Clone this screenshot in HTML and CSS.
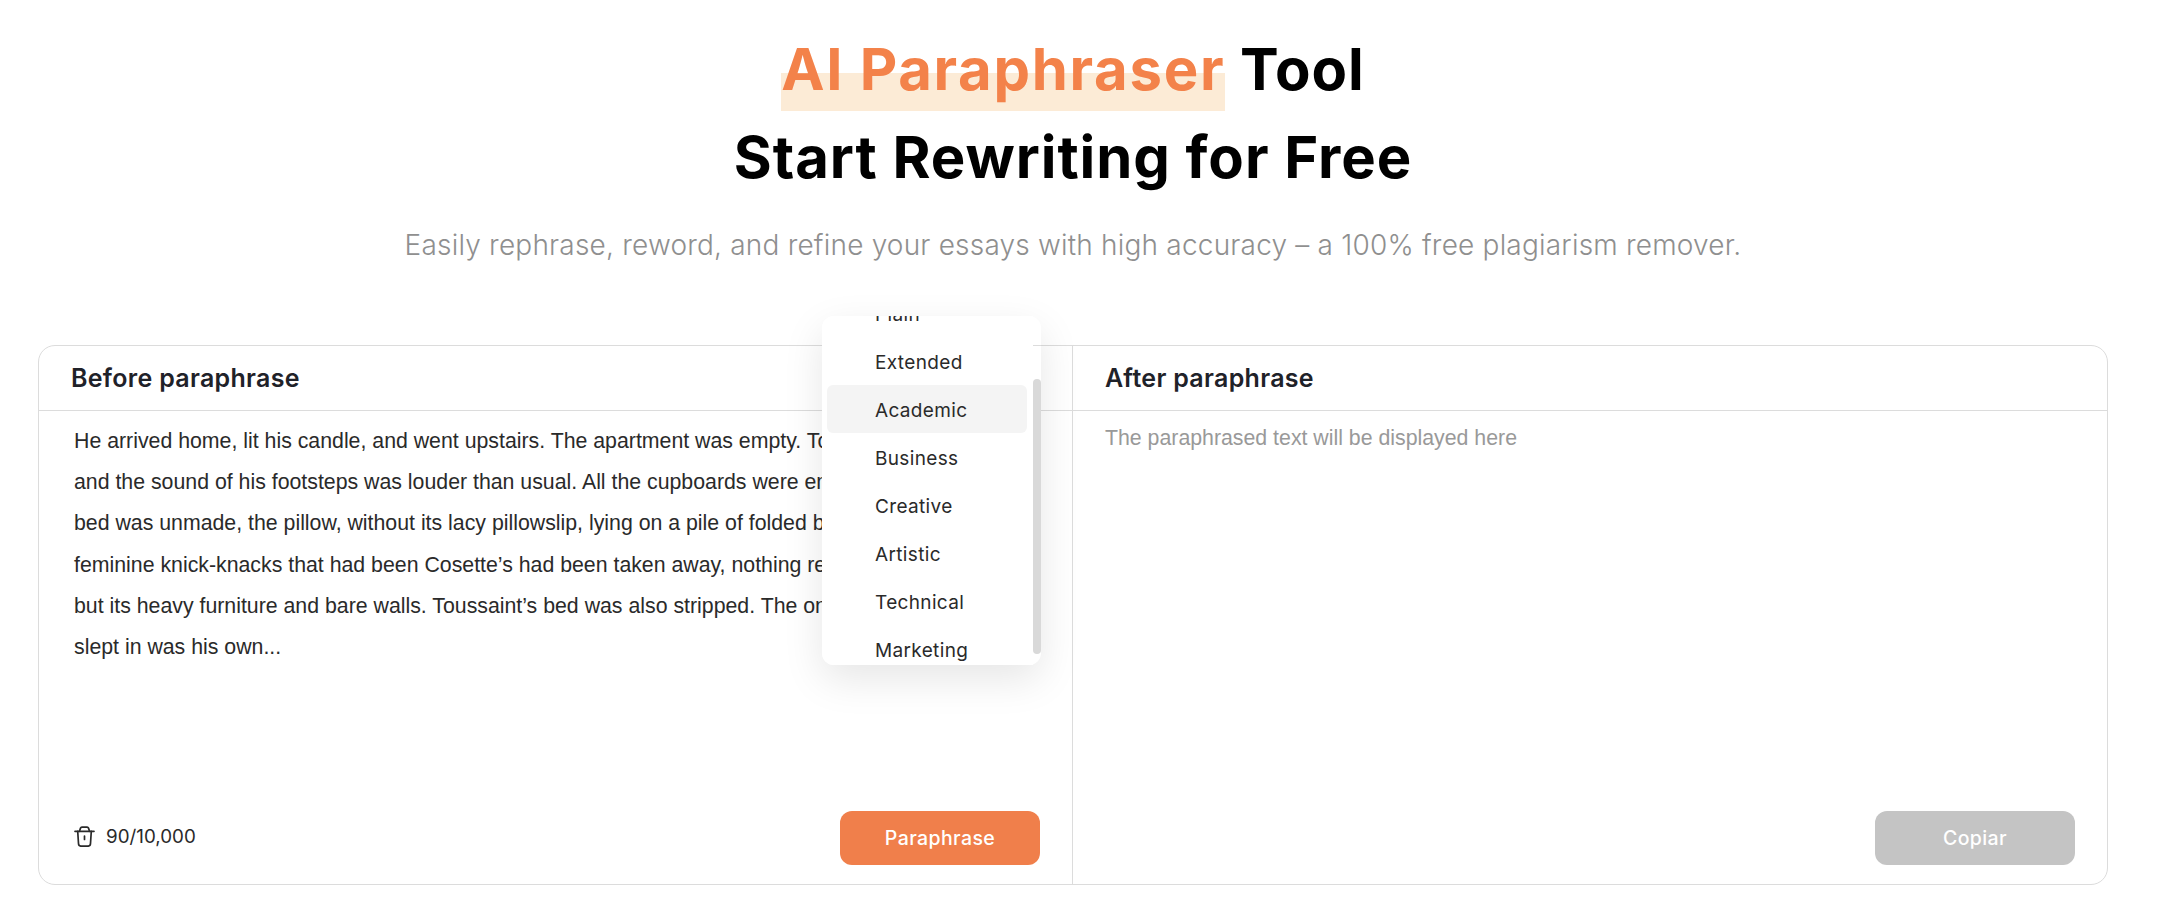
FILE: index.html
```html
<!DOCTYPE html>
<html lang="en">
<head>
<meta charset="utf-8">
<title>AI Paraphraser Tool</title>
<link rel="stylesheet" href="styles.css">
</head>
<body>
<header class="hero">
  <h1 class="title"><span class="title-mark">AI Paraphraser</span> Tool<br>Start Rewriting for Free</h1>
  <p class="lead">Easily rephrase, reword, and refine your essays with high accuracy – a 100% free plagiarism remover.</p>
</header>
<main class="tool">
  <section class="pane">
    <h2 class="pane-head">Before paraphrase</h2>
    <div class="source">He arrived home, lit his candle, and went upstairs. The apartment was empty. Toussaint was gone,<br>and the sound of his footsteps was louder than usual. All the cupboards were empty. Cosette’s<br>bed was unmade, the pillow, without its lacy pillowslip, lying on a pile of folded blankets. All the<br>feminine knick-knacks that had been Cosette’s had been taken away, nothing remained<br>but its heavy furniture and bare walls. Toussaint’s bed was also stripped. The only bed<br>slept in was his own...</div>
    <div class="pane-foot">
      <div class="count">
        <svg class="trash" viewBox="0 0 21 21" fill="none" stroke="currentColor" stroke-width="1.7" stroke-linecap="round" stroke-linejoin="round"><path d="M1 5.300h19"/><path d="M5.500 5.300l1-3.200a1.500 1.500 0 0 1 1.400-1h5.200a1.500 1.500 0 0 1 1.400 1l1 3.200"/><path d="M3.700 5.300l.8 12.200a2.800 2.800 0 0 0 2.800 2.700h6.400a2.800 2.800 0 0 0 2.800-2.700l.8-12.200"/><path d="M10.500 10v3.500"/></svg>
        <span>90/10,000</span>
      </div>
      <button class="btn btn-primary" type="button">Paraphrase</button>
    </div>
  </section>
  <section class="pane pane-right">
    <h2 class="pane-head">After paraphrase</h2>
    <div class="result">The paraphrased text will be displayed here</div>
    <div class="pane-foot pane-foot-end">
      <button class="btn btn-muted" type="button">Copiar</button>
    </div>
  </section>
  <div class="menu">
    <ul class="menu-list">
      <li class="menu-item">Plain</li>
      <li class="menu-item">Extended</li>
      <li class="menu-item is-active">Academic</li>
      <li class="menu-item">Business</li>
      <li class="menu-item">Creative</li>
      <li class="menu-item">Artistic</li>
      <li class="menu-item">Technical</li>
      <li class="menu-item">Marketing</li>
    </ul>
    <span class="menu-thumb"></span>
  </div>
</main>
</body>
</html>
```

FILE: styles.css
```css
* { box-sizing: border-box; }
html, body { margin: 0; padding: 0; background: #fff; }
body { font-family: Inter, "Noto Sans", sans-serif; color: #000; height: 920px; overflow: hidden; }

.hero { width: 2070px; margin-left: 38px; text-align: center; padding-top: 25px; height: 345px; }
.title { margin: 0; font-size: 58px; font-weight: 650; line-height: 88px; letter-spacing: 0.95px; }
.title-mark {
  display: inline-block;
  color: #f3824a;
  letter-spacing: 1.7px;
  background: linear-gradient(#fcebd6, #fcebd6) no-repeat 0 48px / 100% 38px;
}
.lead { margin: 24px 0 0; font-size: 28px; line-height: 40px; font-weight: 300; color: #8f8f8f; letter-spacing: 0.2px; }

.tool {
  position: relative;
  display: grid;
  grid-template-columns: 1033px 1fr;
  width: 2070px;
  height: 540px;
  margin-left: 38px;
  border: 1px solid #dcdcdc;
  border-radius: 17px;
}
.pane { display: flex; flex-direction: column; min-width: 0; }
.pane-right { border-left: 1px solid #dcdcdc; }
.pane-head {
  margin: 0;
  height: 65px;
  padding-left: 32px;
  border-bottom: 1px solid #dcdcdc;
  font-size: 25px;
  line-height: 65px;
  font-weight: 600;
  letter-spacing: 0.3px;
  color: #1f2229;
}
.source {
  padding: 10px 0 0 35px;
  font-family: "Liberation Sans", Arial, sans-serif;
  font-size: 21.300px;
  line-height: 41.200px;
  color: #2a2a2a;
  white-space: nowrap;
}
.result {
  padding: 12px 0 0 32px;
  font-family: "Liberation Sans", Arial, sans-serif;
  font-size: 21.300px;
  line-height: 30px;
  color: #999;
}
.pane-foot {
  display: flex;
  justify-content: space-between;
  align-items: center;
  margin-top: auto;
  padding: 0 32px 19px 35px;
}
.pane-foot-end { justify-content: flex-end; }
.count { display: flex; align-items: center; gap: 11px; font-size: 18.800px; color: #2a2a2a; margin-top: -3px; }
.trash { width: 21px; height: 21px; display: block; }
.btn {
  width: 200px;
  height: 54px;
  border: 0;
  border-radius: 12px;
  color: #fff;
  font: 500 19.500px/53px Inter, sans-serif;
  letter-spacing: 0.4px;
}
.btn-primary { background: #f07f4b; }
.btn-muted { background: #c4c4c4; }

.menu {
  position: absolute;
  left: 783px;
  top: -30px;
  width: 219px;
  height: 349px;
  border-radius: 12px;
  box-shadow: 0 14px 40px rgba(0, 0, 0, 0.1);
}
.menu-list {
  width: 211px;
  height: 100%;
  margin: 0;
  padding: 0 6px 0 5px;
  list-style: none;
  overflow: hidden;
  background: #fff;
  border-radius: 12px 0 0 12px;
}
.menu-item {
  height: 48px;
  padding-left: 48px;
  border-radius: 6px;
  font-size: 19px;
  line-height: 51px;
  color: #2a2a2a;
  letter-spacing: 0.35px;
}
.menu-item:first-child { margin-top: -27px; }
.menu-item.is-active { background: #f4f4f4; }
.menu-thumb {
  position: absolute;
  right: 0;
  top: 63px;
  width: 8px;
  height: 275px;
  border-radius: 4px;
  background: #d9d9d9;
}
```
